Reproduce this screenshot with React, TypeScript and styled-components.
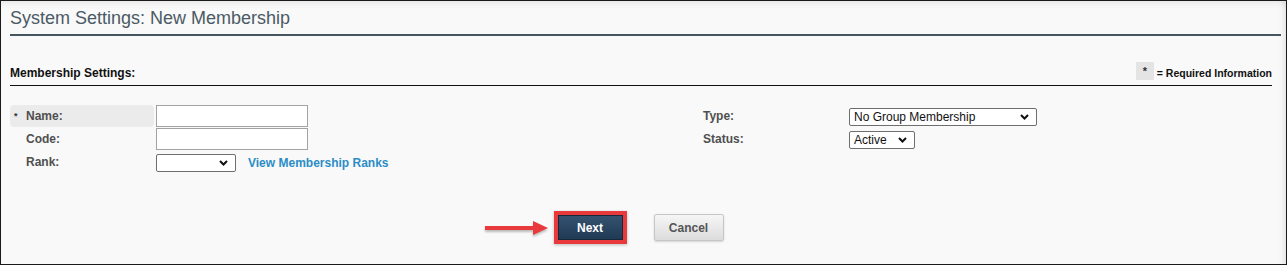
import React from 'react'
import styled, {createGlobalStyle} from 'styled-components'

const GlobalStyle = createGlobalStyle`
  html, body {
    margin: 0;
    padding: 0;
    background: #fff;
  }
  body {
    font-family: "Liberation Sans", Arial, sans-serif;
  }
`

const Frame = styled.div`
  box-sizing: border-box;
  width: 1287px;
  height: 265px;
  border: 1px solid #1a1a1a;
  background: #f9f9f9;
  box-shadow: inset 0 7px 7px -5px rgba(0, 0, 0, 0.08),
    inset -7px 0 6px -5px rgba(0, 0, 0, 0.1);
  overflow: hidden;
`

const PageHeader = styled.div`
  margin: 0 5px 0 9px;
  padding: 6px 0 5px 0;
  border-bottom: 2px solid #45565f;
`

const Title = styled.h1`
  margin: 0;
  font-size: 18px;
  line-height: 22px;
  font-weight: normal;
  color: #4b5a65;
`

const SectionBar = styled.div`
  display: flex;
  align-items: flex-end;
  justify-content: space-between;
  margin: 26px 14px 0 9px;
  padding-bottom: 5px;
  border-bottom: 1px solid #111;
`

const SectionTitle = styled.span`
  font-size: 12px;
  line-height: 13px;
  font-weight: bold;
  color: #111;
`

const Legend = styled.span`
  display: flex;
  align-items: flex-end;
  gap: 3px;
  font-size: 10.5px;
  line-height: 13px;
  font-weight: bold;
  color: #111;
`

const RequiredMark = styled.span`
  display: inline-flex;
  align-items: center;
  justify-content: center;
  width: 18px;
  height: 18px;
  background: #e4e4e4;
  color: #333;
  font-size: 11px;
  font-weight: bold;
  line-height: 18px;
`

const Form = styled.div`
  display: grid;
  grid-template-columns: 693px 1fr;
  margin: 19px 0 0 9px;
`

const Column = styled.div`
  display: flex;
  flex-direction: column;
`

const Row = styled.div`
  display: flex;
  align-items: center;
  gap: 2px;
  height: 23px;
`

const Label = styled.div<{$required?: boolean; $indent?: boolean}>`
  box-sizing: border-box;
  display: flex;
  align-items: center;
  align-self: flex-start;
  width: 144px;
  height: 22px;
  padding-left: ${p => (p.$indent ? '4px' : '0')};
  border-radius: 4px;
  background: ${p => (p.$required ? '#ebebeb' : 'transparent')};
  font-size: 12px;
  font-weight: bold;
  color: #4f4f4f;
`

const Star = styled.span`
  width: 12px;
  font-size: 9px;
  color: #333;
`

const TextInput = styled.input`
  box-sizing: border-box;
  align-self: flex-start;
  width: 152px;
  height: 22px;
  margin: 0;
  border: 1px solid #a3a3a3;
  background: #fff;
  padding: 0 3px;
  font: 12px "Liberation Sans", Arial, sans-serif;
`

const SelectBox = styled.div<{$width: number}>`
  box-sizing: border-box;
  display: flex;
  align-items: center;
  justify-content: space-between;
  width: ${p => p.$width}px;
  height: 18px;
  padding: 0 7px 0 4px;
  border: 1px solid #6e6e6e;
  border-radius: 2px;
  background: #fff;
  font-size: 12px;
  color: #111;
`

const LinkText = styled.a`
  margin-left: 10px;
  font-size: 12px;
  font-weight: bold;
  color: #2a8dc6;
  text-decoration: none;
`

const Actions = styled.div`
  display: flex;
  align-items: center;
  justify-content: center;
  gap: 27px;
  margin-top: 37px;
  padding-right: 10px;
`

const Highlight = styled.span`
  position: relative;
  display: flex;
  border: 4px solid #e8393c;
  box-shadow: 0 1px 3px rgba(0, 0, 0, 0.25);
`

const Pointer = styled.svg`
  position: absolute;
  right: calc(100% + 9px);
  top: 50%;
  margin-top: -9px;
  filter: drop-shadow(0 2px 1px rgba(0, 0, 0, 0.25));
`

const Button = styled.button<{$primary?: boolean}>`
  box-sizing: border-box;
  width: ${p => (p.$primary ? '65px' : '70px')};
  height: ${p => (p.$primary ? '25px' : '27px')};
  margin: 0;
  padding: 0;
  border: 1px solid ${p => (p.$primary ? '#16283a' : '#c6c6c6')};
  border-radius: ${p => (p.$primary ? '0' : '2px')};
  background: ${p =>
    p.$primary
      ? 'linear-gradient(#34526f, #1f3a55)'
      : 'linear-gradient(#f6f6f6, #dcdcdc)'};
  box-shadow: ${p => (p.$primary ? 'none' : '0 1px 2px rgba(0,0,0,0.15)')};
  color: ${p => (p.$primary ? '#fff' : '#555')};
  font: bold 12px "Liberation Sans", Arial, sans-serif;
  cursor: pointer;
`

function Chevron() {
  return (
    <svg width="9" height="6" viewBox="0 0 9 6">
      <polyline points="1,1 4.5,4.5 8,1" fill="none" stroke="#111" strokeWidth="2" />
    </svg>
  )
}

function Select({width, value}: {width: number; value?: string}) {
  return (
    <SelectBox $width={width}>
      <span>{value}</span>
      <Chevron />
    </SelectBox>
  )
}

export default function App() {
  return (
    <>
      <GlobalStyle />
      <Frame>
        <PageHeader>
          <Title>System Settings: New Membership</Title>
        </PageHeader>

        <SectionBar>
          <SectionTitle>Membership Settings:</SectionTitle>
          <Legend>
            <RequiredMark>*</RequiredMark>
            <span>= Required Information</span>
          </Legend>
        </SectionBar>

        <Form>
          <Column>
            <Row>
              <Label $required $indent>
                <Star>*</Star>Name:
              </Label>
              <TextInput />
            </Row>
            <Row>
              <Label $indent>
                <Star />Code:
              </Label>
              <TextInput />
            </Row>
            <Row>
              <Label $indent>
                <Star />Rank:
              </Label>
              <Select width={80} />
              <LinkText href="#">View Membership Ranks</LinkText>
            </Row>
          </Column>
          <Column>
            <Row>
              <Label>Type:</Label>
              <Select width={188} value="No Group Membership" />
            </Row>
            <Row>
              <Label>Status:</Label>
              <Select width={66} value="Active" />
            </Row>
          </Column>
        </Form>

        <Actions>
          <Highlight>
            <Pointer width="64" height="18" viewBox="0 0 64 18">
              <rect x="0" y="7" width="52" height="4" fill="#e8393c" />
              <polygon points="48,2 63,9 48,16" fill="#e8393c" />
            </Pointer>
            <Button $primary>Next</Button>
          </Highlight>
          <Button>Cancel</Button>
        </Actions>
      </Frame>
    </>
  )
}
